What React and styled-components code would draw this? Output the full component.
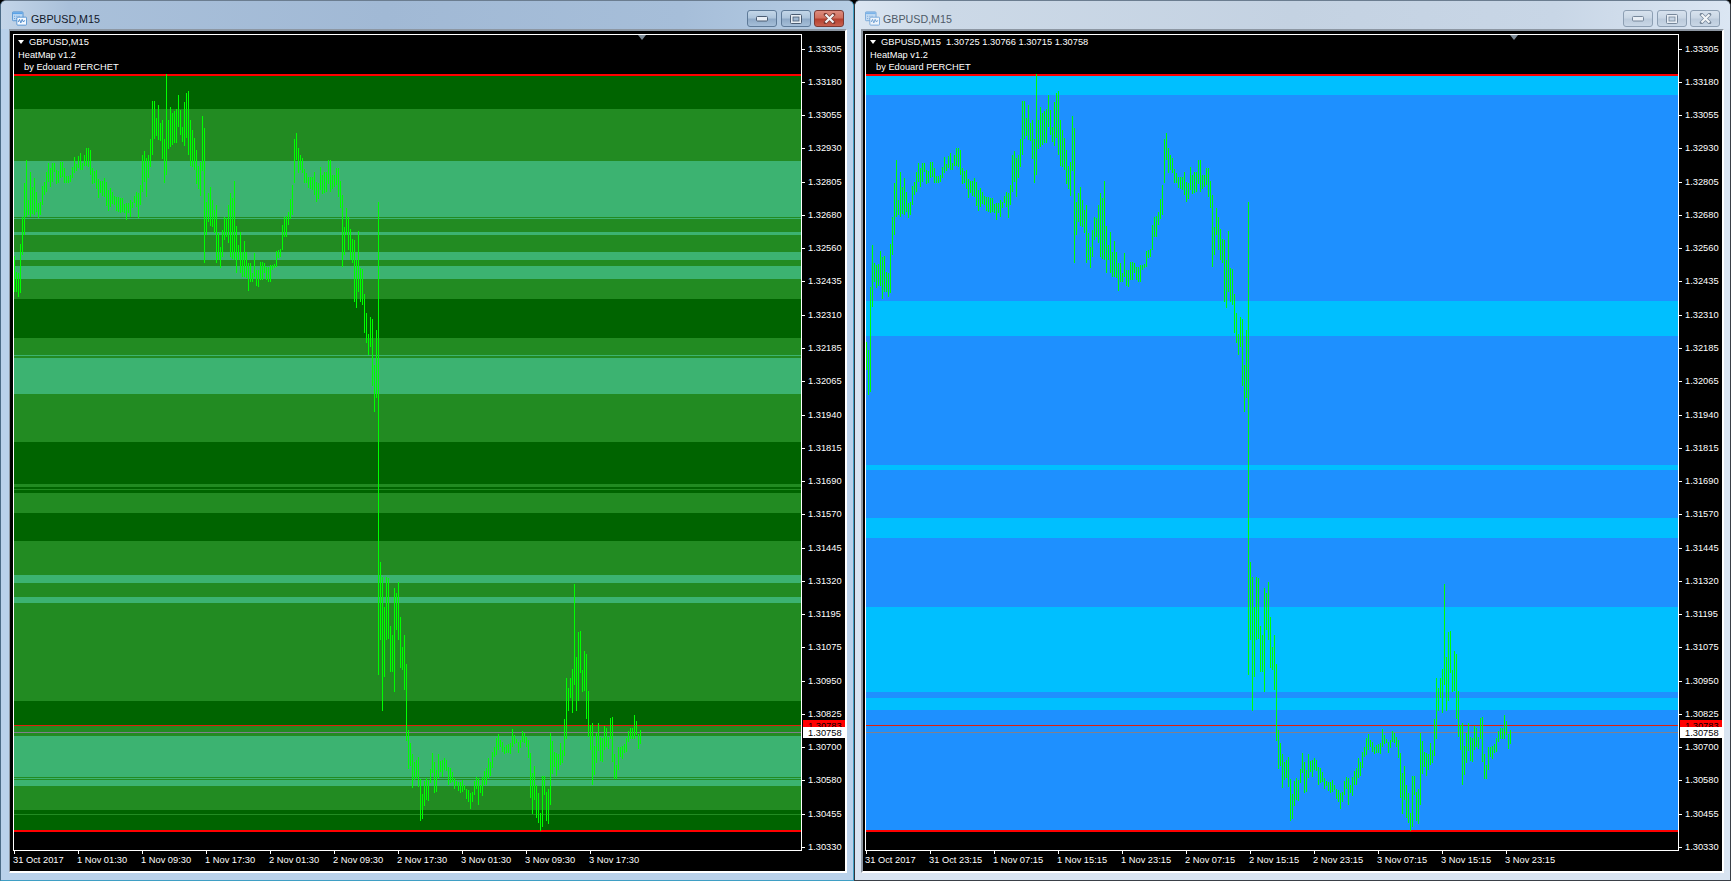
import React from "react";
import styled, { createGlobalStyle } from "styled-components";

// high/low of every bar, read off the chart: [top, bottom] pairs, 3 units per pixel
const BARS_A = [
  588,695, 635,695, 640,710, 552,698, 472,585, 370,525, 300,470, 420,465, 335,470, 380,462,
  355,465, 395,455, 430,475, 425,465, 378,435, 365,405, 335,395, 308,365, 325,380, 308,365,
  310,335, 330,372, 332,370, 305,355, 305,350, 325,368, 348,368, 348,368, 345,365, 322,355,
  290,340, 312,332, 288,325, 280,330, 310,330, 285,318, 265,318, 264,320, 270,345, 325,372,
  332,370, 330,388, 358,415, 362,398, 362,408, 355,410, 365,437, 390,452, 385,440, 395,432,
  408,435, 412,452, 412,455, 415,458, 415,455, 432,460, 430,480, 430,458, 420,470, 425,445,
  408,430, 395,440, 400,475, 375,435, 285,395, 272,365, 295,410, 285,355, 238,320, 122,285,
  122,238, 175,228, 135,240, 190,242, 180,298, 238,368, 42,345, 180,268, 140,260, 158,255,
  152,250, 148,250, 105,200, 150,225, 200,245, 125,258, 100,235, 93,285, 180,318, 210,320,
  235,330, 270,372, 318,388, 305,408, 168,332, 205,610, 425,525, 400,485, 380,498, 420,500,
  450,520, 435,610, 520,600, 560,625, 510,590, 470,540, 475,530, 435,550, 400,590, 415,598,
  362,600, 498,638, 555,600, 515,640, 575,650, 542,650, 575,655, 610,692, 610,665, 640,665,
  580,652, 630,678, 630,682, 605,660, 605,660, 610,640, 620,660, 620,665, 615,665, 615,630,
  612,625, 572,620, 570,595, 568,590, 495,570, 470,532, 468,530, 455,495, 418,478, 375,465,
  238,368, 218,300, 265,340, 285,330, 295,340, 328,368, 340,368, 352,385, 352,388, 350,390,
  335,405, 365,425, 368,418, 322,390, 345,402, 335,398, 335,395, 300,372, 300,395, 345,388,
  345,380, 325,375, 325,410, 362,445, 405,620, 500,585, 445,525, 470,570,
];
const BARS_B = [
  148,240, 178,250, 180,365, 240,383, 153,335, 265,365, 268,375, 342,460, 400,490, 462,525,
  412,500, 418,617, 555,695, 450,655,
];
const BARS_C = [
  -714,705, 365,600, 412,812, 500,710, 410,600, 413,597, 558,695, 585,695, 445,755, 460,570,
  427,600, 530,685, 620,690, 585,750, 672,903, 870,987, 908,978, 942,1043, 965,1020, 960,1015,
  952,1040, 1018,1142, 1062,1136, 1022,1098, 1014,1080, 1020,1082, 988,1030, 938,1000, 965,1058, 990,1055,
  942,1015, 962,995, 960,1012, 955,990, 960,992, 982,1034, 985,1028, 995,1025, 1015,1047, 1022,1038,
  1025,1052, 1025,1058, 1020,1055, 1035,1050, 1047,1077, 1050,1085, 1060,1106, 1055,1085, 1022,1065, 1012,1048,
  1015,1095, 1035,1060, 1012,1067, 993,1035, 985,1035, 955,1015, 965,1008, 935,985, 922,950, 893,945,
  882,930, 900,920, 905,935, 920,942, 915,940, 912,940, 910,942, 867,920, 885,912, 898,910,
  905,938, 900,925, 873,905, 878,908, 890,922, 900,955, 938,1073, 1000,1122, 978,1080, 1035,1133,
  1060,1150, 1120,1172, 1008,1160, 1008,1065, 1055,1142, 1047,1152, 880,1095, 903,1002, 935,980, 940,1007,
  942,990, 910,975, 930,968, 838,947, 715,897, 745,812, 715,775, 688,818, 432,735, 652,812,
  575,782, 573,700, 690,755, 634,752, 642,837, 753,892, 855,930, 850,1034, 918,1005, 880,970,
  850,932, 890,962, 895,967, 858,930, 865,920, 892,926, 835,898, 832,965, 942,1017, 975,1017,
  922,990, 920,950, 917,957, 912,940, 895,935, 873,905, 864,897, 865,897, 825,897, 843,885,
  882,927, 870,912,
];
// the second chart starts 9 bars earlier
const BARS_EXTRA = [
  845,930, 870,1006, 682,995, 555,740, 610,665, 615,683, 612,678, 573,677, 590,717,
];

const toPixels = (list, originY) => {
  const out = [];
  for (let i = 0; i < list.length; i += 2) {
    out.push([originY + list[i] / 3, originY + list[i + 1] / 3]);
  }
  return out;
};

const barsLeft = [
  ...toPixels(BARS_A, 60),
  ...toPixels(BARS_B, 180),
  ...toPixels(BARS_C, 440),
];
const barsRight = [...toPixels(BARS_EXTRA, 60), ...barsLeft];

// band kinds: d = dark, m = mid, l = light; [kind, height]
const GREEN_BANDS = [
  ["d", 33], ["m", 52], ["l", 56], ["m", 1], ["l", 1], ["m", 13], ["l", 3], ["m", 17], ["l", 8],
  ["m", 6], ["l", 13], ["m", 20], ["d", 39], ["m", 17], ["l", 1], ["m", 2], ["l", 36], ["m", 48],
  ["d", 42], ["m", 3], ["d", 2], ["m", 1], ["d", 3], ["m", 20], ["d", 28], ["m", 34], ["l", 8],
  ["m", 14], ["l", 6], ["m", 98], ["d", 24], ["m", 11], ["l", 41], ["m", 1], ["l", 1], ["m", 1],
  ["l", 6], ["m", 24], ["d", 4], ["m", 1], ["d", 15],
];
const BLUE_BANDS = [
  ["l", 19], ["d", 206], ["l", 35], ["d", 129], ["l", 5], ["d", 48], ["l", 20], ["d", 69],
  ["l", 85], ["d", 6], ["l", 12], ["d", 120],
];

const GREENS = { d: "#006400", m: "#228b22", l: "#3cb371" };
const BLUES = { d: "#1e90ff", l: "#00bfff" };

const PRICES = [
  "1.33305", "1.33180", "1.33055", "1.32930", "1.32805", "1.32680", "1.32560", "1.32435", "1.32310",
  "1.32185", "1.32065", "1.31940", "1.31815", "1.31690", "1.31570", "1.31445", "1.31320", "1.31195",
  "1.31075", "1.30950", "1.30825", "1.30700", "1.30580", "1.30455", "1.30330",
];

const DATES_LEFT = [
  "31 Oct 2017", "1 Nov 01:30", "1 Nov 09:30", "1 Nov 17:30", "2 Nov 01:30",
  "2 Nov 09:30", "2 Nov 17:30", "3 Nov 01:30", "3 Nov 09:30", "3 Nov 17:30",
];
const DATES_RIGHT = [
  "31 Oct 2017", "31 Oct 23:15", "1 Nov 07:15", "1 Nov 15:15", "1 Nov 23:15", "2 Nov 07:15",
  "2 Nov 15:15", "2 Nov 23:15", "3 Nov 07:15", "3 Nov 15:15", "3 Nov 23:15",
];

const GlobalStyle = createGlobalStyle`
  html, body {
    margin: 0;
    padding: 0;
    background: #000;
    overflow: hidden;
  }
  * {
    box-sizing: border-box;
  }
`;

const Desktop = styled.div`
  display: flex;
  width: 1731px;
  height: 881px;
  font-family: "Liberation Sans", Arial, sans-serif;
`;

const Window = styled.section`
  display: flex;
  flex-direction: column;
  flex: 0 0 ${(p) => (p.$active ? "854px" : "877px")};
  height: 881px;
  border: 1px solid ${(p) => (p.$active ? "#3f9fc4" : "#3a4048")};
  border-top-color: #6b7d90;
  border-left-color: ${(p) => (p.$active ? "#4b6b86" : "#30343a")};
  border-radius: 6px 6px 0 0;
  background: ${(p) => (p.$active ? "#b9d1ea" : "#d9e4f1")};
`;

const TitleBar = styled.header`
  display: flex;
  align-items: flex-start;
  flex: 0 0 28px;
  padding: 9px ${(p) => (p.$active ? "9px" : "10px")} 0 ${(p) => (p.$active ? "11px" : "10px")};
  border-radius: 5px 5px 0 0;
  background: ${(p) =>
    p.$active
      ? "linear-gradient(90deg, #c3d5e8 0%, #a9c0da 8%, #a1b9d5 45%, #a6bed9 80%, #b6cde4 100%)"
      : "linear-gradient(90deg, #dbe6f2 0%, #ccd9e7 10%, #c4d2e2 50%, #c8d6e6 80%, #dbe6f3 100%)"};
`;

const TitleIcon = styled.svg`
  flex: none;
  margin-top: 1px;
  width: 15px;
  height: 15px;
  opacity: ${(p) => (p.$active ? 1 : 0.75)};
`;

const TitleText = styled.span`
  margin: 3px 0 0 ${(p) => (p.$active ? "4px" : "3px")};
  font-size: 10.7px;
  line-height: 13px;
  color: ${(p) => (p.$active ? "#12182a" : "#4f5a68")};
`;

const Buttons = styled.div`
  display: flex;
  gap: 3.5px;
  margin-left: auto;
`;

const CaptionButton = styled.div`
  display: flex;
  align-items: center;
  justify-content: center;
  width: 30px;
  height: 17px;
  border: 1px solid ${(p) => (p.$close && p.$active ? "#7c3a34" : p.$active ? "#5e7a98" : "#8d9fb3")};
  border-radius: 3px;
  background: ${(p) =>
    p.$close && p.$active
      ? "linear-gradient(180deg, #dc8c7e 0%, #d0705f 45%, #b5402f 55%, #c8614f 100%)"
      : p.$active
      ? "linear-gradient(180deg, #c3d6e8 0%, #aec5dc 45%, #8faac7 55%, #a6bfd9 100%)"
      : "linear-gradient(180deg, #d7e2ee 0%, #cad7e5 45%, #bccbdc 55%, #c9d7e6 100%)"};
`;

const Client = styled.div`
  flex: 1;
  display: grid;
  grid-template-columns: 1fr 43px;
  grid-template-rows: 1fr 20px;
  min-height: 0;
  margin: 0 6px 7px ${(p) => (p.$active ? "8px" : "6px")};
  padding-left: ${(p) => (p.$active ? "3px" : "2px")};
  border-style: solid;
  border-width: 2px 2px 2px ${(p) => (p.$active ? "1px" : "2px")};
  border-color: #8d97a3 #fff #fff #8d97a3;
  background: #000;
`;

const Plot = styled.div`
  position: relative;
  display: flex;
  flex-direction: column;
  margin-top: 3px;
  border: 1px solid #fff;
  overflow: hidden;
`;

const Legend = styled.div`
  flex: 0 0 41px;
  padding: 1px 0 0 4px;
  border-bottom: 2px solid #f00;
  font-size: 9.3px;
  line-height: 12.7px;
  color: #fff;
`;

const LegendTop = styled.div`
  display: flex;
  align-items: center;
  white-space: pre;
`;

const LegendArrow = styled.i`
  width: 0;
  height: 0;
  margin: 0 5px 0 0;
  border: solid transparent;
  border-width: 4px 3.5px 0;
  border-top-color: #fff;
`;

const LegendLine = styled.div`
  padding-left: ${(p) => (p.$indent ? "6px" : "0")};
`;

const Bands = styled.div`
  flex: 0 0 754px;
  display: flex;
  flex-direction: column;
`;

const Band = styled.div`
  flex: 0 0 ${(p) => p.$h}px;
  background: ${(p) => p.$color};
`;

const PlotFoot = styled.div`
  flex: 1;
  border-top: 2px solid #f00;
`;

const BarsLayer = styled.svg`
  position: absolute;
  top: 0;
  left: 0;
  width: 100%;
  height: 100%;
  shape-rendering: crispEdges;
`;

const ShiftMark = styled.i`
  position: absolute;
  top: 0;
  right: ${(p) => p.$right}px;
  width: 0;
  height: 0;
  border: solid transparent;
  border-width: 5px 4px 0;
  border-top-color: #7c8a96;
`;

const DateRow = styled.div`
  display: flex;
  padding-left: 1px;
  font-size: 9.3px;
  line-height: 18px;
  color: #fff;
`;

const DateLabel = styled.span`
  position: relative;
  flex: 0 0 64px;
  white-space: nowrap;
  text-indent: -1px;

  &::before {
    content: "";
    position: absolute;
    top: 0;
    left: 0;
    width: 1px;
    height: 3px;
    background: #fff;
  }
`;

const Axis = styled.div`
  grid-column: 2;
  grid-row: 1 / span 2;
  position: relative;
  display: grid;
  grid-auto-rows: 33.27px;
  align-content: start;
  padding-top: 1px;
`;

const Price = styled.div`
  position: relative;
  display: flex;
  align-items: center;
  padding-left: 6px;
  font-size: 9.3px;
  color: #fff;

  &::before {
    content: "";
    position: absolute;
    top: 50%;
    left: 0;
    width: 3px;
    height: 1px;
    background: #fff;
  }
`;

const PriceTag = styled.div`
  position: absolute;
  left: 1px;
  right: 0;
  top: ${(p) => p.$top}px;
  height: ${(p) => p.$h}px;
  padding-left: 5px;
  font-size: 9.3px;
  line-height: 12px;
  color: #000;
  background: ${(p) => p.$bg};
`;

const AppGlyph = ({ active }) => (
  <TitleIcon $active={active} viewBox="0 0 17 16">
    <rect x="0.5" y="0.5" width="12" height="10" rx="1" fill="#bcd9f5" stroke="#4f8fd0" />
    <rect x="1" y="1" width="11" height="2" fill="#5aa2e6" />
    <path d="M2.5 5h1v1h-1zM5 5h1v1H5zM7.5 5h1v1h-1zM2.5 7.5h1v1h-1zM5 7.5h1v1H5z" fill="#5a8fc8" />
    <rect x="5.5" y="6.5" width="11" height="9" rx="1" fill="#f4f9ff" stroke="#4f8fd0" />
    <path d="M7 12l1.5-3 1.5 4 1.5-4 1.5 3 1.5-2" fill="none" stroke="#3d7fc4" strokeWidth="1" />
  </TitleIcon>
);

const MinGlyph = ({ active }) => (
  <svg width="12" height="6" viewBox="0 0 12 6">
    <rect x="0.5" y="0.5" width="11" height="4.5" rx="1" fill="#e8eef5" stroke={active ? "#4a5c72" : "#76879a"} />
  </svg>
);

const MaxGlyph = ({ active }) => (
  <svg width="12" height="10" viewBox="0 0 12 10">
    <rect x="0.5" y="0.5" width="11" height="9" rx="1" fill="#e8eef5" stroke={active ? "#4a5c72" : "#76879a"} />
    <rect x="3" y="3" width="6" height="4" fill={active ? "#9db5cf" : "#c4d2e2"} stroke={active ? "#4a5c72" : "#76879a"} strokeWidth="0.8" />
  </svg>
);

const CloseGlyph = ({ active }) => (
  <svg width="13" height="11" viewBox="0 0 13 11">
    <path
      d="M2.5 1.5l8 8M10.5 1.5l-8 8"
      fill="none"
      stroke={active ? "#7a3a32" : "#76879a"}
      strokeWidth="3.6"
      strokeLinecap="round"
    />
    <path d="M2.5 1.5l8 8M10.5 1.5l-8 8" fill="none" stroke="#f2f5f8" strokeWidth="2.2" />
  </svg>
);

const ChartWindow = ({ active, title, legend, bands, colors, bars, dates, markRight }) => {
  const top = 35;
  const path = bars
    .map(([hi, lo], i) => `M${i * 2 + 0.5} ${Math.round(hi) - top}V${Math.round(lo) - top}`)
    .join("");

  return (
    <Window $active={active}>
      <TitleBar $active={active}>
        <AppGlyph active={active} />
        <TitleText $active={active}>{title}</TitleText>
        <Buttons>
          <CaptionButton $active={active}>
            <MinGlyph active={active} />
          </CaptionButton>
          <CaptionButton $active={active}>
            <MaxGlyph active={active} />
          </CaptionButton>
          <CaptionButton $active={active} $close>
            <CloseGlyph active={active} />
          </CaptionButton>
        </Buttons>
      </TitleBar>
      <Client $active={active}>
        <Plot>
          <Legend>
            <LegendTop>
              <LegendArrow />
              {legend}
            </LegendTop>
            <LegendLine>HeatMap v1.2</LegendLine>
            <LegendLine $indent>by Edouard PERCHET</LegendLine>
          </Legend>
          <Bands>
            {bands.map(([kind, h], i) => (
              <Band key={i} $h={h} $color={colors[kind]} />
            ))}
          </Bands>
          <PlotFoot />
          <BarsLayer>
            <path d="M0 690.5H900" stroke="#e0200c" strokeWidth="1" fill="none" />
            <path d="M0 697.5H900" stroke="#80808e" strokeWidth="1" fill="none" />
            <path d={path} stroke="#00ff00" strokeWidth="1" fill="none" />
          </BarsLayer>
          <ShiftMark $right={markRight} />
        </Plot>
        <DateRow>
          {dates.map((d) => (
            <DateLabel key={d}>{d}</DateLabel>
          ))}
        </DateRow>
        <Axis>
          {PRICES.map((p) => (
            <Price key={p}>{p}</Price>
          ))}
          <PriceTag $top={689} $h={8} $bg="#f00">1.30783</PriceTag>
          <PriceTag $top={696} $h={11} $bg="#fff">1.30758</PriceTag>
        </Axis>
      </Client>
    </Window>
  );
};

export default function App() {
  return (
    <Desktop>
      <GlobalStyle />
      <ChartWindow
        active
        title="GBPUSD,M15"
        legend="GBPUSD,M15"
        bands={GREEN_BANDS}
        colors={GREENS}
        bars={barsLeft}
        dates={DATES_LEFT}
        markRight={155}
      />
      <ChartWindow
        title="GBPUSD,M15"
        legend="GBPUSD,M15  1.30725 1.30766 1.30715 1.30758"
        bands={BLUE_BANDS}
        colors={BLUES}
        bars={barsRight}
        dates={DATES_RIGHT}
        markRight={160}
      />
    </Desktop>
  );
}
